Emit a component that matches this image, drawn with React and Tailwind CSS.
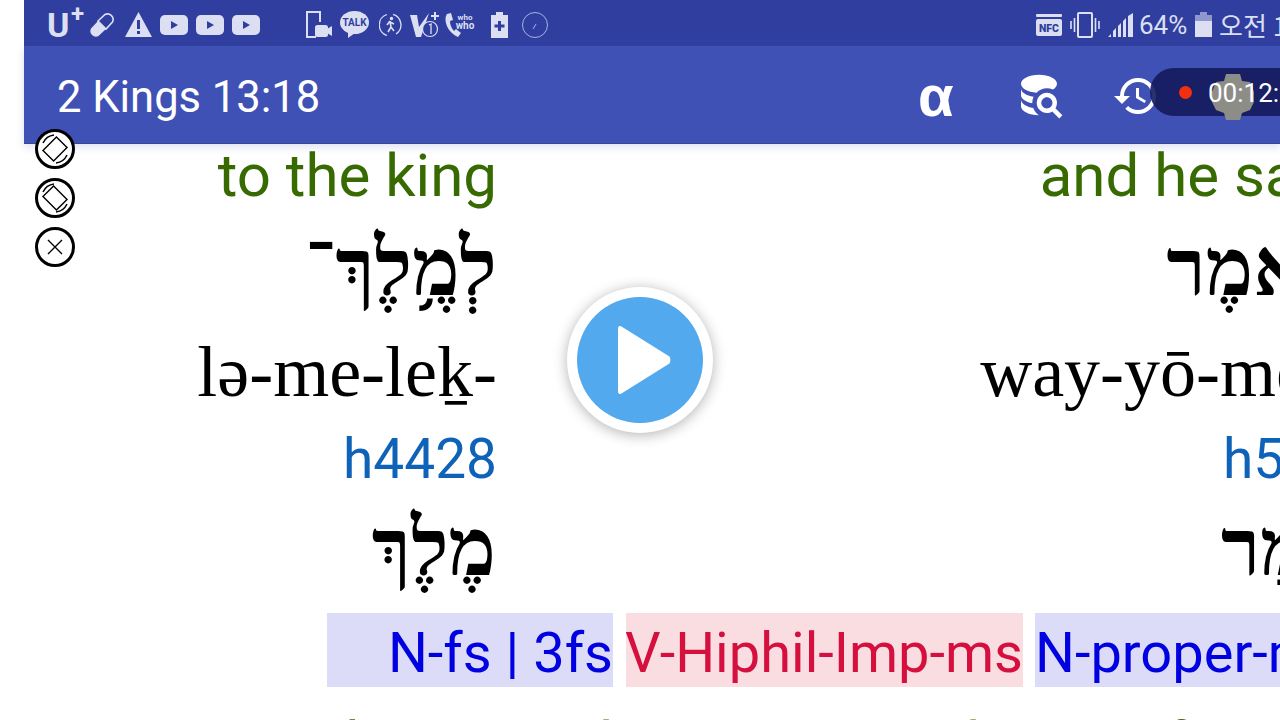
import React from 'react'
import { MdHistory } from 'react-icons/md'

const roboto = "font-['Roboto',sans-serif]"

// Words of the interlinear, right-most visible column last
const words = [
  {
    width: 'w-[286px] mr-px',
    pad: 'pr-[116px]',
    translitPad: 'pr-[116px]',
    english: 'to the king',
    hebrew: 'לְמֶ֥לֶךְ־',
    hebrewPad: 'pr-[116px]',
    translit: 'lə-me-leḵ-',
    strong: 'h4428',
    lemma: 'מֶלֶךְ',
    lemmaPad: 'pr-[117px]',
    tag: 'N-fs | 3fs',
    tagClass: 'bg-[#dcdcf8] text-[#0000e0] justify-end',
    next: 'the ground',
    nextPad: 'pr-0',
  },
  {
    width: 'w-[397px]',
    tag: 'V-Hiphil-Imp-ms',
    tagClass: 'bg-[#f9dde1] text-[#d5103f] justify-end',
    next: 'Strike',
    nextPad: '-mr-[5px]',
  },
  {
    width: 'w-[458px]',
    pad: 'pr-[147px]',
    translitPad: 'pr-[161px]',
    english: 'and he said',
    hebrew: 'וַיֹּ֣אמֶר',
    hebrewPad: 'pr-[147px]',
    translit: 'way-yō-mer',
    strong: 'h559',
    lemma: 'אָמַר',
    lemmaPad: 'pr-[134px]',
    tag: 'N-proper-ms',
    tagClass: 'bg-[#dcdcf8] text-[#0000e0] justify-start',
    next: 'of Israel',
    nextPad: 'pr-[147px]',
  },
]

function WordColumn({ word }) {
  return (
    <div className={`${word.width} shrink-0 flex flex-col whitespace-nowrap`}>
      <div className={`h-[64px] flex justify-end text-[60px] leading-[64px] text-[#376a00] ${roboto} ${word.pad}`}>{word.english}</div>
      <div className={`h-[116px] flex justify-end text-[80px] leading-[120px] text-black font-bold font-['Liberation_Serif',serif] ${word.hebrewPad}`}>
        <span dir="rtl">{word.hebrew}</span>
      </div>
      <div className={`h-[96px] flex justify-end text-[72px] leading-[96px] text-black font-['Liberation_Serif',serif] ${word.translitPad}`}>{word.translit}</div>
      <div className={`h-[76px] flex justify-end text-[55px] leading-[78px] text-[#0e63b8] ${roboto} ${word.pad}`}>{word.strong}</div>
      <div className={`h-[117px] flex justify-end text-[80px] leading-[104px] text-black font-bold font-['Liberation_Serif',serif] ${word.lemmaPad}`}>
        <span dir="rtl">{word.lemma}</span>
      </div>
      <div className={`h-[74px] flex text-[56px] leading-[80px] overflow-hidden ${roboto} ${word.tagClass}`}>{word.tag}</div>
      <div className={`mt-[25px] h-[60px] flex justify-end text-[60px] leading-[64px] text-[#376a00] ${roboto} ${word.nextPad}`}>{word.next}</div>
    </div>
  )
}

function PlayBox() {
  return (
    <svg width="28" height="20" viewBox="0 0 28 20">
      <rect width="28" height="20" rx="5" fill="#dcdff2" />
      <path d="M11 6 L18 10 L11 14 Z" fill="#303f9f" />
    </svg>
  )
}

function RotateBadge({ angle }) {
  return (
    <div className="w-10 h-10 rounded-full bg-white border-[3px] border-black flex items-center justify-center">
      <svg width="34" height="34" viewBox="0 0 34 34" fill="none" stroke="#000">
        <rect x="9.5" y="7.5" width="15" height="19" strokeWidth="1.4" transform={`rotate(${angle} 17 17)`} />
        <path d="M5 11 A14 14 0 0 1 16 3 M29 23 A14 14 0 0 1 18 31" strokeWidth="1.5" />
      </svg>
    </div>
  )
}

function StatusLeft() {
  return (
    <div className="flex items-center h-full pl-[23px] pt-[3px]">
      <span className={`relative w-[36px] text-[34px] leading-none font-bold text-[#dcdff2] ${roboto}`}>
        U<span className="absolute left-[24px] -top-[6px] text-[24px]">+</span>
      </span>
      <svg className="ml-[6px]" width="26" height="26" viewBox="0 0 26 26">
        <path d="M9 9 L17 17 L9.5 24 A5.6 5.6 0 0 1 2 16.5 Z" fill="#dcdff2" />
        <path d="M9 9 L16 2.5 A5.6 5.6 0 0 1 23.5 10 L17 17 Z" fill="none" stroke="#dcdff2" strokeWidth="1.6" />
      </svg>
      <svg className="ml-[10px]" width="27" height="25" viewBox="0 0 27 25">
        <path d="M13.5 0 L27 25 H0 Z" fill="#dcdff2" />
        <rect x="12" y="8" width="3" height="9" fill="#303f9f" />
        <rect x="12" y="19" width="3" height="3" fill="#303f9f" />
      </svg>
      <div className="ml-2 flex gap-2">
        <PlayBox />
        <PlayBox />
        <PlayBox />
      </div>
      <svg className="ml-[46px]" width="26" height="27" viewBox="0 0 26 27" fill="none" stroke="#dcdff2" strokeWidth="2">
        <path d="M10 26 H1 V1 H14 V11" />
        <rect x="10" y="15" width="11" height="10" rx="1.5" fill="#dcdff2" />
        <path d="M21 18 L26 15 V25 L21 22 Z" fill="#dcdff2" stroke="none" />
      </svg>
      <svg className="ml-2" width="29" height="27" viewBox="0 0 29 27">
        <ellipse cx="14.5" cy="11.5" rx="14.5" ry="11.5" fill="#dcdff2" />
        <path d="M8 20 L8 27 L15 22 Z" fill="#dcdff2" />
        <text x="14.5" y="15" textAnchor="middle" fontSize="10" fontWeight="700" fill="#303f9f" fontFamily="Roboto, sans-serif">TALK</text>
      </svg>
      <svg className="ml-[10px]" width="23" height="24" viewBox="0 0 23 24" fill="none" stroke="#dcdff2">
        <path d="M14 1.3 A11 11 0 0 1 17 21 M8 22.5 A11 11 0 0 1 8 1.5" strokeWidth="1.3" />
        <circle cx="12.5" cy="5.5" r="1.7" fill="#dcdff2" stroke="none" />
        <path d="M11 8 L8 12 M11 8 L12 14 L9 19 M12 14 L15 18 M11 9 L15 11" strokeWidth="1.6" />
      </svg>
      <svg className="ml-2" width="31" height="26" viewBox="0 0 31 26" fill="none" stroke="#dcdff2">
        <path d="M0 3 H7 L9 15 L19 1 L11 25 H6 Z" fill="#dcdff2" stroke="none" />
        <path d="M25 0 V8 M21 4 H29" strokeWidth="2" />
        <circle cx="20" cy="17" r="7.5" fill="#303f9f" strokeWidth="1.2" />
        <path d="M19 13 L21 12 V22" strokeWidth="1.3" />
      </svg>
      <svg className="ml-[3px]" width="34" height="26" viewBox="0 0 34 26">
        <path d="M3 2 C-1 8 3 20 14 25 L17 21 L12 17 L10 19 C7 16 6 12 6 9 L9 8 L7 1 Z" fill="#dcdff2" />
        <text x="21" y="8" textAnchor="middle" fontSize="8" fontWeight="700" fill="#dcdff2" fontFamily="Roboto, sans-serif">who</text>
        <text x="21" y="17" textAnchor="middle" fontSize="10" fontWeight="700" fill="#dcdff2" fontFamily="Roboto, sans-serif">who</text>
      </svg>
      <svg className="ml-[13px]" width="17" height="26" viewBox="0 0 17 26">
        <path d="M5 0 H12 V3 H17 V26 H0 V3 H5 Z" fill="#dcdff2" />
        <path d="M8.5 9 V19 M3.5 14 H13.5" stroke="#303f9f" strokeWidth="3" />
      </svg>
      <svg className="ml-[14px]" width="26" height="26" viewBox="0 0 26 26" fill="none" stroke="#aab2e0" strokeWidth="1">
        <circle cx="13" cy="13" r="12.5" />
        <path d="M11 17 L14 12" />
      </svg>
    </div>
  )
}

function StatusRight() {
  return (
    <div className="absolute right-0 top-0 h-[46px] pt-[3px] flex items-center text-[#dcdff2]">
      <svg width="26" height="24" viewBox="0 0 26 24">
        <rect y="1" width="26" height="3" rx="1" fill="#dcdff2" />
        <rect y="6" width="26" height="17" rx="2" fill="#dcdff2" />
        <text x="13" y="19" textAnchor="middle" fontSize="10.5" fontWeight="900" fill="#303f9f" fontFamily="Roboto, sans-serif">NFC</text>
      </svg>
      <svg className="ml-2" width="30" height="26" viewBox="0 0 30 26" fill="none" stroke="#dcdff2" strokeWidth="2">
        <rect x="8" y="1" width="14" height="24" rx="1" />
        <path d="M4.5 6 V20 M1 9 V17 M25.5 6 V20 M29 9 V17" strokeWidth="1.6" />
      </svg>
      <svg className="ml-2" width="25" height="24" viewBox="0 0 25 24" fill="#dcdff2">
        <path d="M0 24 L3 21 V24 Z M5 24 V18 L8 15 V24 Z M10 24 V13 L13 10 V24 Z M15 24 V8 L18 5 V24 Z M20 24 V3 L25 0 V24 Z" />
      </svg>
      <span className={`ml-[6px] w-[47px] text-[26px] leading-none whitespace-nowrap ${roboto}`}>64%</span>
      <svg className="ml-[9px]" width="17" height="25" viewBox="0 0 17 25">
        <path d="M5 0 H12 V3 H17 V25 H0 V3 H5 Z" fill="#8f97cf" />
        <rect y="9" width="17" height="16" fill="#dcdff2" />
      </svg>
      <span className="ml-[7px] w-[61px] text-[26px] leading-none whitespace-nowrap overflow-hidden font-['Noto_Sans_CJK_KR',sans-serif]">오전 1</span>
    </div>
  )
}

function AppBarIcons() {
  return (
    <div className="absolute top-0 left-0 h-full w-full">
      <span className="absolute left-[894px] top-[18px] text-[58px] leading-[64px] font-bold text-white font-['Liberation_Sans',sans-serif]">α</span>
      <svg className="absolute left-[988px] top-[22px]" width="54" height="54" viewBox="0 0 24 24" fill="#fff">
        <path d="M18.68,12.32C16.92,10.56 14.07,10.57 12.32,12.33C10.56,14.09 10.56,16.94 12.32,18.69C13.81,20.17 16.11,20.43 17.89,19.32L21,22.39L22.39,21L19.3,17.89C20.43,16.12 20.17,13.8 18.68,12.32M17.27,17.27C16.29,18.25 14.71,18.24 13.73,17.27C12.76,16.29 12.76,14.71 13.74,13.73C14.71,12.76 16.29,12.76 17.27,13.73C18.24,14.71 18.24,16.29 17.27,17.27M10.9,20.1C10.25,19.44 9.74,18.65 9.42,17.78C6.27,17.25 4,15.76 4,14V17C4,19.21 7.58,21 12,21V21C11.6,20.74 11.23,20.44 10.9,20.1M4,9V12C4,13.68 6.07,15.12 9,15.7C9,15.63 9,15.57 9,15.5C9,14.57 9.2,13.65 9.58,12.81C6.34,12.3 4,10.79 4,9M12,3C7.58,3 4,4.79 4,7C4,9 7,10.68 10.85,11H10.9C12.1,9.74 13.76,9 15.5,9C16.41,9.03 17.31,9.22 18.14,9.58C19.27,9.03 19.96,8.05 20,7C20,4.79 16.42,3 12,3Z" />
      </svg>
      <MdHistory className="absolute left-[1088px] top-[26px] text-white" size={48} />
    </div>
  )
}

export default function App() {
  return (
    <div className="relative w-[1280px] h-[720px] overflow-hidden bg-white flex">
      <div className="w-6 shrink-0 bg-white" />
      <div className="relative flex-1 min-w-0 flex flex-col">
        <div className="relative h-[46px] shrink-0 bg-[#303f9f]">
          <StatusLeft />
          <StatusRight />
        </div>
        <div className="relative h-[98px] shrink-0 bg-[#3f51b5] flex items-center pl-[33px] pt-[6px] border-b border-[#3a4690] shadow-[0_3px_8px_rgba(63,81,181,0.18)] z-10">
          <span className={`text-[43.5px] leading-none text-white ${roboto}`}>2 Kings 13:18</span>
          <AppBarIcons />
        </div>
        <div className="flex gap-3 pl-[303px] w-[1800px]">
          {words.map((word) => (
            <WordColumn key={word.tag} word={word} />
          ))}
        </div>
      </div>

      {/* screen recorder overlay */}
      <div className="absolute left-[1150px] top-[68px] w-[160px] h-[48px] rounded-l-[24px] bg-[#151a5c]/90 z-20 flex items-center">
        <span className="ml-[29px] w-[13px] h-[13px] rounded-full bg-[#f23010]" />
        <svg className="absolute left-[60px] top-[6px]" width="46" height="46" viewBox="0 0 46 46" fill="#8d8d88">
          <path d="M16 0 H30 L32 7 L40 8 L44 18 V28 L40 36 L32 39 L30 46 H16 L14 39 L6 36 L2 28 V18 L6 8 L14 7 Z" />
        </svg>
        <span className={`relative ml-[16px] pt-[2px] text-[26px] leading-none text-white ${roboto}`}>00:12:</span>
      </div>

      <div className="absolute left-[35px] top-[129px] flex flex-col gap-[9px] z-20">
        <RotateBadge angle={45} />
        <RotateBadge angle={-45} />
        <div className="w-10 h-10 rounded-full bg-white border-[3px] border-black flex items-center justify-center">
          <svg width="20" height="20" viewBox="0 0 20 20" stroke="#000" strokeWidth="1.4">
            <path d="M3 3 L17 17 M17 3 L3 17" />
          </svg>
        </div>
      </div>

      {/* play button */}
      <div className="absolute left-[567px] top-[287px] w-[146px] h-[146px] rounded-full bg-white shadow-[0_2px_14px_rgba(0,0,0,0.3)] flex items-center justify-center z-20">
        <div className="w-[126px] h-[126px] rounded-full bg-[#52a9ed] flex items-center justify-center">
          <svg className="ml-[8px]" width="56" height="72" viewBox="0 0 56 72">
            <path d="M4 4 L52 34 Q53 36 52 38 L4 68 Z" fill="#fff" stroke="#fff" strokeWidth="4" strokeLinejoin="round" />
          </svg>
        </div>
      </div>
    </div>
  )
}
